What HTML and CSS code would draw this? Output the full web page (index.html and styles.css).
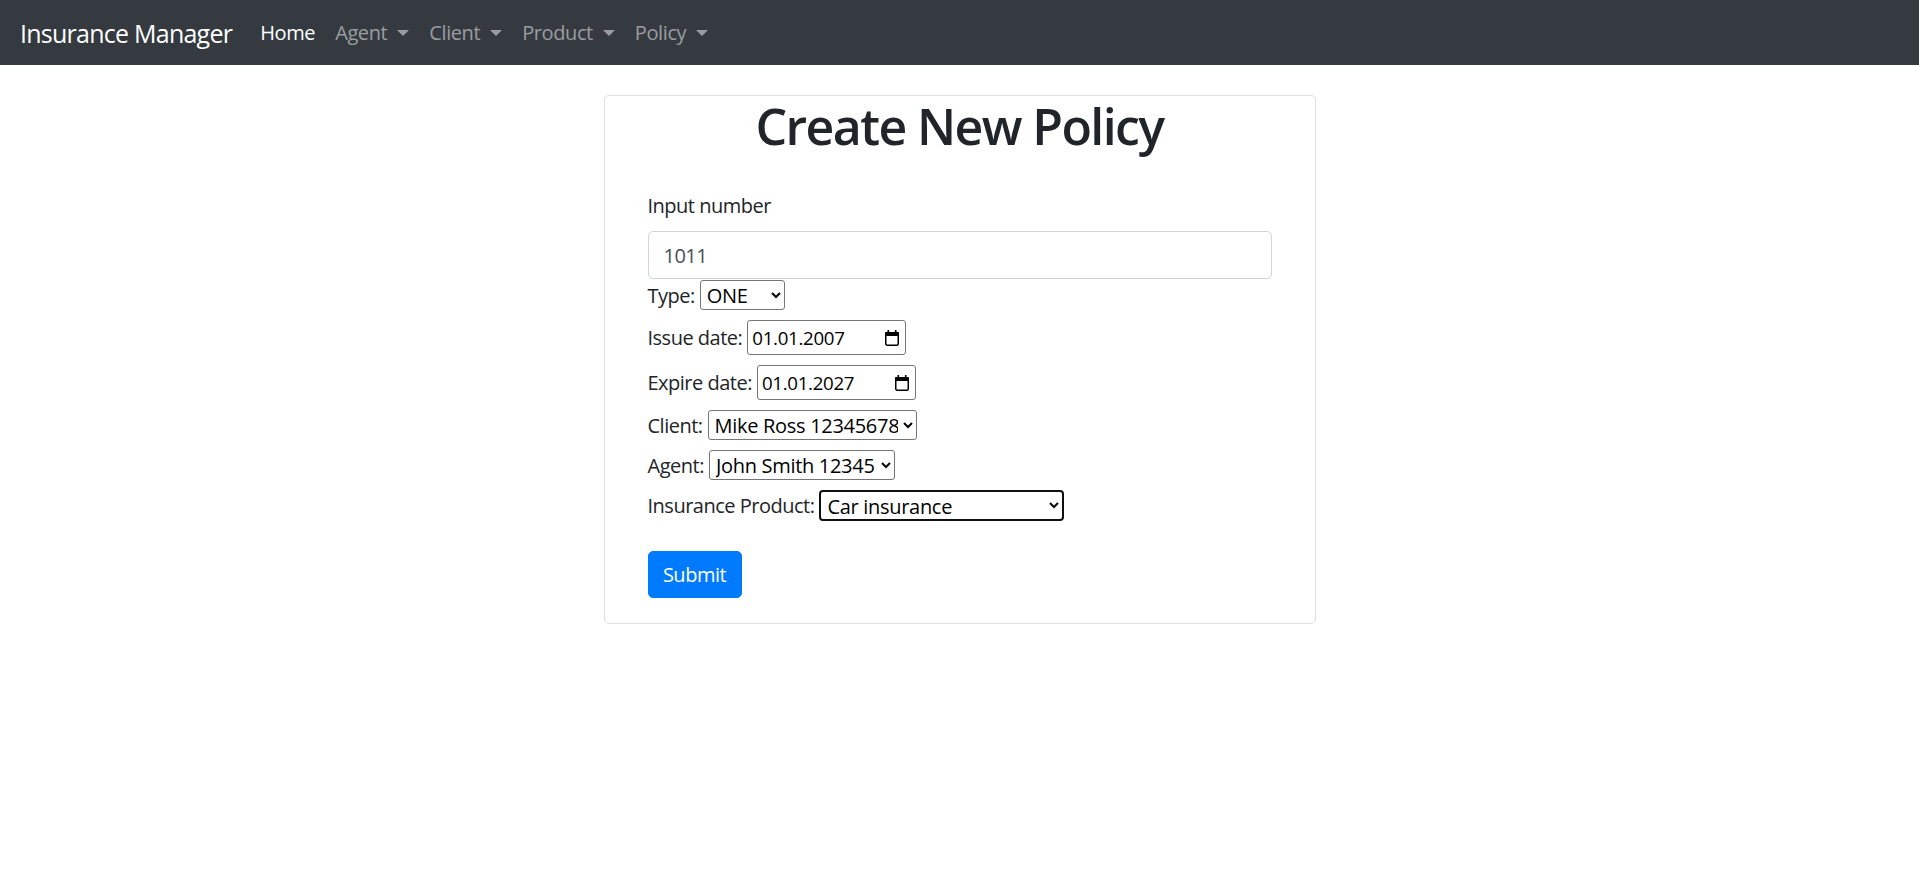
FILE: index.html
```html
<!DOCTYPE html>
<html lang="de">
<head>
<meta charset="utf-8">
<title>Insurance Manager</title>
<link rel="stylesheet" href="styles.css">
</head>
<body>
<nav class="navbar">
  <a class="brand" href="#">Insurance Manager</a>
  <ul class="nav">
    <li><a class="nav-link active" href="#">Home</a></li>
    <li><a class="nav-link dropdown" href="#">Agent</a></li>
    <li><a class="nav-link dropdown" href="#">Client</a></li>
    <li><a class="nav-link dropdown" href="#">Product</a></li>
    <li><a class="nav-link dropdown" href="#">Policy</a></li>
  </ul>
</nav>
<main class="page">
  <div class="card">
    <h1 class="title">Create New Policy</h1>
    <form class="form">
      <label class="field-label" for="num">Input number</label>
      <input class="text-input" id="num" type="text" value="1011">
      <div class="rows">
        <div class="row"><label for="type">Type:</label>
          <select id="type" class="ctl sel-type"><option>ONE</option><option>TWO</option><option>THREE</option></select></div>
        <div class="row"><label for="issue">Issue date:</label>
          <span class="ctl date"><input id="issue" class="date-text" type="text" value="01.01.2007"><svg class="cal" width="16" height="18" viewBox="0 0 16 18"><rect x="1.75" y="3.75" width="12.5" height="12.5" rx="1.5" fill="none" stroke="#000" stroke-width="1.5"/><rect x="1" y="3" width="14" height="4" rx="1" fill="#000"/><rect x="3.5" y="1" width="1.6" height="3" fill="#000"/><rect x="10.9" y="1" width="1.6" height="3" fill="#000"/></svg></span></div>
        <div class="row"><label for="exp">Expire date:</label>
          <span class="ctl date"><input id="exp" class="date-text" type="text" value="01.01.2027"><svg class="cal" width="16" height="18" viewBox="0 0 16 18"><rect x="1.75" y="3.75" width="12.5" height="12.5" rx="1.5" fill="none" stroke="#000" stroke-width="1.5"/><rect x="1" y="3" width="14" height="4" rx="1" fill="#000"/><rect x="3.5" y="1" width="1.6" height="3" fill="#000"/><rect x="10.9" y="1" width="1.6" height="3" fill="#000"/></svg></span></div>
        <div class="row"><label for="client">Client:</label>
          <select id="client" class="ctl sel-client"><option>Mike Ross 12345678</option></select></div>
        <div class="row"><label for="agent">Agent:</label>
          <select id="agent" class="ctl sel-agent"><option>John Smith 12345</option></select></div>
        <div class="row"><label for="prod">Insurance Product:</label>
          <select id="prod" class="ctl sel-prod focused"><option>Car insurance</option></select></div>
      </div>
      <button class="btn" type="button">Submit</button>
    </form>
  </div>
</main>
</body>
</html>
```
FILE: styles.css
```css
* { box-sizing: border-box; }
html, body { margin: 0; padding: 0; }
body {
  font-family: "Open Sans", "Noto Sans", sans-serif;
  font-size: 20px;
  color: #212529;
  background: #fff;
}
a { text-decoration: none; }

.navbar {
  height: 65px;
  background: #343a40;
  display: flex;
  align-items: center;
  padding: 0 20px;
}
.brand {
  color: #fff;
  font-size: 25px;
  margin-right: 18px;
  letter-spacing: -0.75px;
}
.nav {
  display: flex;
  list-style: none;
  margin: 0;
  padding: 0;
}
.nav-link {
  display: block;
  padding: 0 10px;
  color: rgba(255,255,255,0.5);
  font-size: 20px;
  letter-spacing: -0.4px;
}
.nav-link.active { color: #fff; }
.dropdown::after {
  content: "";
  display: inline-block;
  margin-left: 10px;
  vertical-align: 4px;
  border-top: 6px solid;
  border-left: 6px solid transparent;
  border-right: 6px solid transparent;
}

.page { padding-top: 30px; }
.card {
  width: 712px;
  margin: 0 auto;
  border: 1px solid rgba(0,0,0,0.125);
  border-radius: 5px;
  padding: 0 43px 25px;
}
.title {
  margin: 0 0 35px;
  font-size: 50px;
  font-weight: 600;
  line-height: 60px;
  text-align: center;
  letter-spacing: -1.6px;
}
.field-label {
  display: block;
  line-height: 30px;
  margin-bottom: 10px;
  letter-spacing: -0.5px;
}
.text-input {
  display: block;
  width: 100%;
  height: 48px;
  border: 1px solid #ced4da;
  border-radius: 5px;
  padding: 0 15px;
  font: inherit;
  color: #495057;
  letter-spacing: -0.5px;
}
.rows {
  display: flex;
  flex-direction: column;
  gap: 10px;
  margin-top: 1px;
}
.row {
  display: flex;
  align-items: center;
  gap: 5px;
  letter-spacing: -0.5px;
}
.ctl {
  font-family: "Open Sans", "Noto Sans", sans-serif;
  font-size: 20px;
  color: #000;
  letter-spacing: -0.3px;
  background: #fff;
  border: 1px solid #767676;
  border-radius: 3px;
  margin: 0;
}
select.ctl { height: 30px; padding: 0 2px; }
.date {
  display: inline-flex;
  align-items: center;
  justify-content: space-between;
  height: 35px;
  width: 159px;
  padding: 0 5px 0 4px;
  font-size: 18.7px;
  letter-spacing: -0.3px;
}
.date-text {
  width: 112px;
  border: 0;
  padding: 0;
  margin: 0;
  font: inherit;
  letter-spacing: inherit;
  color: #000;
  background: transparent;
  outline: none;
}
.cal { flex: none; }
.sel-type { width: 85px; }
.sel-client { width: 209px; }
.sel-agent { width: 186px; }
.sel-prod { width: 245px; }
.focused {
  border: 2px solid #101010;
  border-radius: 4px;
  height: 31px !important;
}
.btn {
  margin-top: 30px;
  height: 47px;
  width: 94px;
  background: #007bff;
  color: #fff;
  border: 1px solid #007bff;
  border-radius: 5px;
  font: inherit;
  letter-spacing: -0.5px;
  padding: 0;
}
```
